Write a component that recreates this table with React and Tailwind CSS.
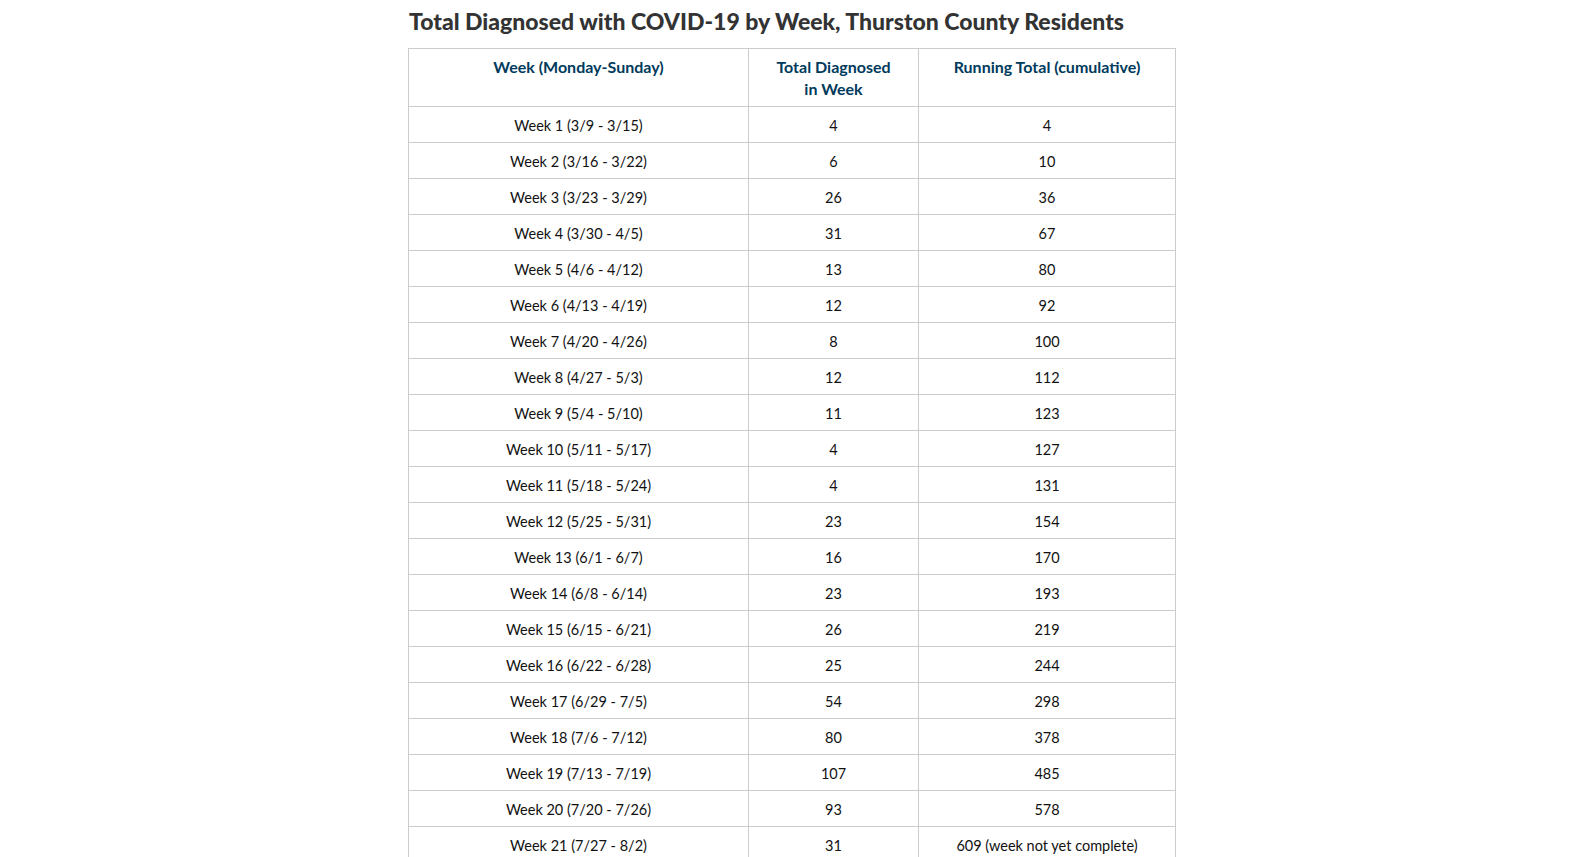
import React from "react";

const rows = [
  ["Week 1 (3/9 - 3/15)", "4", "4"],
  ["Week 2 (3/16 - 3/22)", "6", "10"],
  ["Week 3 (3/23 - 3/29)", "26", "36"],
  ["Week 4 (3/30 - 4/5)", "31", "67"],
  ["Week 5 (4/6 - 4/12)", "13", "80"],
  ["Week 6 (4/13 - 4/19)", "12", "92"],
  ["Week 7 (4/20 - 4/26)", "8", "100"],
  ["Week 8 (4/27 - 5/3)", "12", "112"],
  ["Week 9 (5/4 - 5/10)", "11", "123"],
  ["Week 10 (5/11 - 5/17)", "4", "127"],
  ["Week 11 (5/18 - 5/24)", "4", "131"],
  ["Week 12 (5/25 - 5/31)", "23", "154"],
  ["Week 13 (6/1 - 6/7)", "16", "170"],
  ["Week 14 (6/8 - 6/14)", "23", "193"],
  ["Week 15 (6/15 - 6/21)", "26", "219"],
  ["Week 16 (6/22 - 6/28)", "25", "244"],
  ["Week 17 (6/29 - 7/5)", "54", "298"],
  ["Week 18 (7/6 - 7/12)", "80", "378"],
  ["Week 19 (7/13 - 7/19)", "107", "485"],
  ["Week 20 (7/20 - 7/26)", "93", "578"],
  ["Week 21 (7/27 - 8/2)", "31", "609 (week not yet complete)"],
];

export default function App() {
  return (
    <div className="min-h-screen bg-white" style={{ fontFamily: "Lato, 'Open Sans', sans-serif" }}>
      <div className="mx-auto w-[767px] pt-[5px]">
        <h2 className="text-[23px] leading-[32px] font-black text-[#333333] pl-[1px] mb-[11px]">
          Total Diagnosed with COVID-19 by Week, Thurston County Residents
        </h2>
        <table className="w-[767px] border-collapse table-fixed">
          <colgroup>
            <col className="w-[340px]" />
            <col className="w-[170px]" />
            <col className="w-[257px]" />
          </colgroup>
          <thead>
            <tr className="h-[58px]">
              <th className="border border-[#cccccc] align-top pt-[7px] px-2 text-[16px] leading-[22px] font-bold text-[#003a5c]">
                Week (Monday-Sunday)
              </th>
              <th className="border border-[#cccccc] align-top pt-[7px] px-2 text-[16px] leading-[22px] font-bold text-[#003a5c]">
                Total Diagnosed
                <br />
                in Week
              </th>
              <th className="border border-[#cccccc] align-top pt-[7px] px-2 text-[16px] leading-[22px] font-bold text-[#003a5c]">
                Running Total (cumulative)
              </th>
            </tr>
          </thead>
          <tbody>
            {rows.map((r, i) => (
              <tr key={i} className="h-[36px]">
                {r.map((c, j) => (
                  <td
                    key={j}
                    className="border border-[#cccccc] text-center align-middle px-2 pt-[2px] pb-0 text-[14.5px] leading-[22px] text-[#111111]"
                  >
                    {c}
                  </td>
                ))}
              </tr>
            ))}
          </tbody>
        </table>
      </div>
    </div>
  );
}
